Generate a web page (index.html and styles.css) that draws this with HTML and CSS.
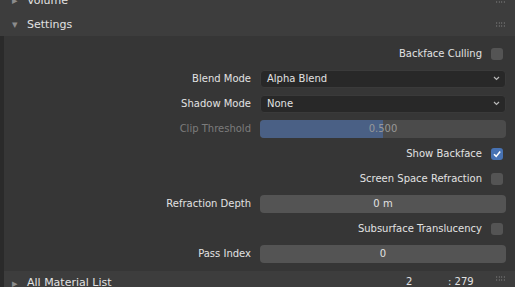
FILE: index.html
```html
<!DOCTYPE html>
<html lang="en">

<head>
	<title>Material Settings</title>
	<link rel="stylesheet" href="styles.css">
</head>

<body>

	<div class="header header-top">
		<span class="arrow">&#9656;</span>
		<span class="title">Volume</span>
		<span class="grip"></span>
	</div>

	<div class="header">
		<span class="arrow">&#9662;</span>
		<span class="title">Settings</span>
		<span class="grip"></span>
	</div>

	<div class="lower">
		<div class="panel">
			<div class="row check-row">
				<span>Backface Culling</span>
				<span class="check"></span>
			</div>
			<div class="row">
				<span class="label">Blend Mode</span>
				<div class="menu">
					<span>Alpha Blend</span>
					<svg class="chev" width="7" height="5" viewBox="0 0 7 5"><path d="M1 1 L3.5 3.5 L6 1" fill="none" stroke="#b8b8b8" stroke-width="1.2"/></svg>
				</div>
			</div>
			<div class="row">
				<span class="label">Shadow Mode</span>
				<div class="menu">
					<span>None</span>
					<svg class="chev" width="7" height="5" viewBox="0 0 7 5"><path d="M1 1 L3.5 3.5 L6 1" fill="none" stroke="#b8b8b8" stroke-width="1.2"/></svg>
				</div>
			</div>
			<div class="row disabled">
				<span class="label">Clip Threshold</span>
				<div class="field slider">
					<div class="fill" style="width:50%"></div>
					<span class="value">0.500</span>
				</div>
			</div>
			<div class="row check-row">
				<span>Show Backface</span>
				<span class="check on">
					<svg width="10" height="10" viewBox="0 0 10 10"><path d="M2 5.2 L4.2 7.4 L8.2 2.6" fill="none" stroke="#fff" stroke-width="1.6"/></svg>
				</span>
			</div>
			<div class="row check-row">
				<span>Screen Space Refraction</span>
				<span class="check"></span>
			</div>
			<div class="row">
				<span class="label">Refraction Depth</span>
				<div class="field"><span class="value">0 m</span></div>
			</div>
			<div class="row check-row">
				<span>Subsurface Translucency</span>
				<span class="check"></span>
			</div>
			<div class="row">
				<span class="label">Pass Index</span>
				<div class="field"><span class="value">0</span></div>
			</div>
		</div>

		<div class="header header-bottom">
			<span class="arrow">&#9656;</span>
			<span class="title">All Material List</span>
			<span class="count">2</span>
			<span class="count-total">: 279</span>
			<span class="grip"></span>
		</div>
	</div>

</body>

</html>
```

FILE: styles.css
```css
:root {
	--panel-color: #363636;
	--header-color: #3d3d3d;
	--strip-color: #2a2a2a;
	--text-color: #e2e2e2;
	--field-color: #545454;
	--menu-color: #282828;
	--accent-color: #4772b3;
}
body {
	margin: 0;
	width: 515px;
	height: 287px;
	overflow: hidden;
	background: var(--panel-color);
	color: var(--text-color);
	font-family: "DejaVu Sans", sans-serif;
	font-size: 10px;
}
.header {
	height: 24px;
	background: var(--header-color);
	display: flex;
	align-items: center;
	padding-left: 12px;
	padding-right: 10px;
}
.header-top { margin-top: -12px;}
.arrow { color: #8c8c8c; font-size: 11px; width: 15px;}
.title { font-size: 11px; flex: 1;}
.grip {
	width: 9px;
	height: 5px;
	background-image: radial-gradient(circle, #9a9a9a 0.7px, transparent 0.8px);
	background-size: 2.5px 3px;
	background-position: -0.5px -0.5px;
}
.lower { border-left: 4px solid var(--strip-color);}
.panel { padding: 5px 0 5px 0;}
.row {
	height: 25px;
	display: flex;
	align-items: center;
}
.label {
	width: 247px;
	text-align: right;
	margin-right: 9px;
}
.disabled .label { color: #7c7c7c;}
.check-row {
	justify-content: flex-end;
	padding-right: 12px;
}
.check {
	width: 12px;
	height: 12px;
	margin-left: 9px;
	border-radius: 3px;
	background: var(--field-color);
	display: flex;
	align-items: center;
	justify-content: center;
}
.check.on { background: var(--accent-color);}
.menu, .field {
	width: 246px;
	height: 18px;
	box-sizing: border-box;
	border-radius: 4px;
	display: flex;
	align-items: center;
	position: relative;
	overflow: hidden;
}
.menu {
	background: var(--menu-color);
	border: 1px solid #3a3a3a;
	padding-left: 6px;
	padding-right: 5px;
	justify-content: space-between;
}
.field {
	background: var(--field-color);
	justify-content: center;
}
.slider { background: #4b4b4b;}
.fill {
	position: absolute;
	left: 0;
	top: 0;
	bottom: 0;
	background: #4a6085;
}
.value { position: relative;}
.disabled .value { color: #989898;}
.header-bottom {
	height: 24px;
	padding-left: 8px;
	align-items: flex-start;
	padding-top: 5px;
	box-sizing: border-box;
}
.header-bottom .arrow { padding-top: 1px;}
.count { width: 42px;}
.count-total { width: 48px;}
```
